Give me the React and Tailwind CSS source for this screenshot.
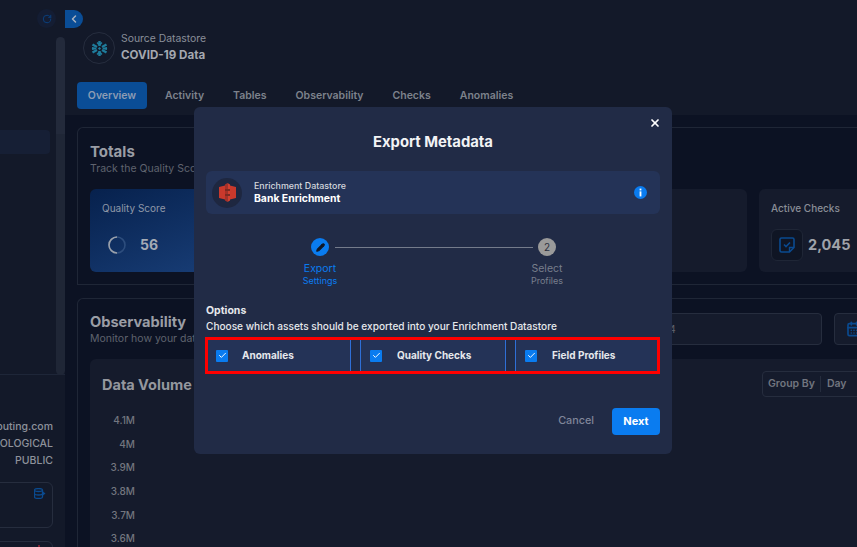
import React from 'react';
import { Check, ChevronLeft, Pencil, RotateCw, X, CalendarDays } from 'lucide-react';

const tabs = ['Activity', 'Tables', 'Observability', 'Checks', 'Anomalies'];
const axis = ['4.1M', '4M', '3.9M', '3.8M', '3.7M', '3.6M'];
const options = [
    { label: 'Anomalies', box: 'w-[143px] border-r', gap: 'pl-[8px]', text: 'ml-[14px]' },
    { label: 'Quality Checks', box: 'w-[146px] border-x', gap: 'pl-[9px]', text: 'ml-[15px]' },
    { label: 'Field Profiles', box: 'w-[142px] border-l', gap: 'pl-[9px]', text: 'ml-[15px]' },
];

const S3Logo = () => (
    <svg width="17" height="19" viewBox="0 0 17 19">
        <path d="M0 4 L6 2.5 V16.5 L0 15 Z" fill="#c9392c" />
        <path d="M17 4 L11 2.5 V16.5 L17 15 Z" fill="#c9392c" />
        <path d="M6 1.5 L8.5 0 V19 L6 17.5 Z" fill="#a82f26" />
        <path d="M11 1.5 L8.5 0 V19 L11 17.5 Z" fill="#d2402f" />
        <path d="M6 6 H11 V8 H6 Z M6 11 H11 V13 H6 Z" fill="#7d2a22" />
    </svg>
);

const SnowflakeLogo = () => (
    <svg width="17" height="17" viewBox="0 0 17 17" fill="none" stroke="#1f7c9c" strokeWidth="2.4">
        <path d="M8.5 1 V6 M8.5 11 V16" />
        <path d="M6.2 2.5 L8.5 5 L10.8 2.5 M6.2 14.5 L8.5 12 L10.8 14.5" strokeWidth="1.8" />
        <path d="M1.5 4.5 L6 7 M15.5 4.5 L11 7 M1.5 12.5 L6 10 M15.5 12.5 L11 10" />
        <path d="M1 7.8 L5.2 8.5 L1 9.2 M16 7.8 L11.8 8.5 L16 9.2" strokeWidth="1.6" />
        <rect x="7.4" y="7.4" width="2.2" height="2.2" transform="rotate(45 8.5 8.5)" fill="#1f7c9c" stroke="none" />
    </svg>
);

const InfoDot = () => (
    <svg width="13" height="13" viewBox="0 0 13 13">
        <circle cx="6.5" cy="6.5" r="6.5" fill="#0a7cf0" />
        <rect x="5.6" y="2.6" width="1.8" height="1.8" fill="#fff" />
        <rect x="5.6" y="5.4" width="1.8" height="5" fill="#fff" />
    </svg>
);

const NoteCheck = () => (
    <svg width="16" height="16" viewBox="0 0 16 16" fill="none" stroke="#0a4a8f">
        <path d="M10.5 15 H2.5 A1.5 1.5 0 0 1 1 13.5 V2.5 A1.5 1.5 0 0 1 2.5 1 H13.5 A1.5 1.5 0 0 1 15 2.5 V10.5 Z" strokeWidth="1.6" />
        <path d="M10.5 15 V10.5 H15" strokeWidth="1.4" />
        <path d="M5 7.5 L7 9.5 L11 5.5" strokeWidth="1.6" />
    </svg>
);

const DatabaseArrow = () => (
    <svg width="12" height="11" viewBox="0 0 12 11" fill="none" stroke="#0a4a8f" strokeWidth="1.3">
        <ellipse cx="4.5" cy="2" rx="4" ry="1.5" />
        <path d="M0.5 2 V9 C0.5 10 2.5 10.5 4.5 10.5 C6.5 10.5 8.5 10 8.5 9 V2 M0.5 5.5 C0.5 6.5 2.5 7 4.5 7 C6 7 7 6.8 8 6.3" />
        <path d="M9 3.5 L11.5 5.5 L9 7.5 Z" fill="#0a4a8f" stroke="none" />
    </svg>
);

const Sidebar = () => (
    <aside className="w-[65px] shrink-0 flex flex-col bg-[#131929] overflow-hidden">
        <div className="h-[375px] shrink-0 flex border-b border-[#1e2638]">
            <div className="w-[56px] shrink-0">
                <div className="flex justify-end pt-[9px]">
                    <div className="w-[19px] h-[19px] rounded-full bg-[#141d33] flex items-center justify-center">
                        <RotateCw size={10} strokeWidth={2.4} className="text-[#0a3f7c]" />
                    </div>
                </div>
                <div className="mt-[102px] h-[24px] w-[50px] rounded-r bg-[#161f35]" />
            </div>
            <div className="w-[9px] pt-[37px]">
                <div className="h-[97px] bg-[#232a3b] rounded-t-md" />
                <div className="h-[241px] bg-[#1f2636] rounded-b-md" />
            </div>
        </div>
        <div className="w-[53px] flex flex-col items-end pt-[43px] text-[10.5px] leading-[17px] font-medium text-[#8e929b] whitespace-nowrap">
            <span>Computing.com</span>
            <span>BIOLOGICAL</span>
            <span>PUBLIC</span>
            <div className="mt-[13px] w-[80px] h-[46px] shrink-0 rounded-md border border-[#262d3e] flex justify-end pt-[5px] pr-[6px]">
                <DatabaseArrow />
            </div>
            <div className="mt-[13px] w-[80px] h-[30px] shrink-0 rounded-md border border-[#262d3e] flex justify-end pr-[12px]">
                <div className="w-[2px] h-[3px] mt-[3px] bg-[#7a2233]" />
            </div>
        </div>
    </aside>
);

const Header = () => (
    <header className="h-[115px] shrink-0 bg-[#131929] flex flex-col">
        <div className="flex items-start">
            <div className="mt-[10px] w-[18px] h-[18px] rounded-r-full bg-[#0a4d96] flex items-center justify-center">
                <ChevronLeft size={12} strokeWidth={3} className="text-[#a9b1bf]" />
            </div>
            <div className="mt-[32px] flex items-center">
                <div className="w-[32px] h-[32px] rounded-full border border-[#262d3e] flex items-center justify-center">
                    <SnowflakeLogo />
                </div>
                <div className="ml-[6px]">
                    <div className="text-[10.4px] leading-[14px] text-[#8a8f99]">Source Datastore</div>
                    <div className="text-[11.6px] leading-[18px] font-bold text-[#a4a8b0]">COVID-19 Data</div>
                </div>
            </div>
        </div>
        <nav className="mt-[18px] ml-[12px] flex items-center text-[10.5px] font-semibold text-[#7d828c]">
            <span className="w-[70px] h-[27px] rounded bg-[#0a4d96] text-[#8c9cb4] flex items-center justify-center">Overview</span>
            <div className="ml-[18px] flex gap-[29px]">
                {tabs.map((t) => <span key={t}>{t}</span>)}
            </div>
        </nav>
    </header>
);

const Totals = () => (
    <section className="h-[158px] shrink-0 rounded-tl-md border border-r-0 border-[#1f2636] pl-[12px] pt-[15px]">
        <h2 className="text-[15px] leading-[18px] font-bold text-[#9a9da5]">Totals</h2>
        <p className="mt-px text-[10.5px] leading-[14px] text-[#5f636e] whitespace-nowrap">Track the Quality Score</p>
        <div className="mt-[13px] flex gap-[12px]">
            <div className="w-[657px] h-[83px] shrink-0 rounded-md flex">
                <div className="w-[200px] h-[83px] rounded-l-md bg-gradient-to-br from-[#07214d] to-[#1c4480] pl-[12px] pt-[12px]">
                    <div className="text-[10px] leading-[14px] text-[#8f98a8]">Quality Score</div>
                    <div className="mt-[20px] ml-[6px] flex items-center gap-[14px]">
                        <svg width="18" height="18" viewBox="0 0 18 18" fill="none">
                            <circle cx="9" cy="9" r="8" stroke="#2d4d7d" strokeWidth="1.6" />
                            <path d="M9 17 A8 8 0 1 1 9 1" stroke="#9aa0aa" strokeWidth="1.6" />
                        </svg>
                        <span className="text-[14px] leading-[20px] font-bold text-[#a5abb5]">56</span>
                    </div>
                </div>
                <div className="flex-1 h-[83px] rounded-r-md bg-[#151b2c]" />
            </div>
            <div className="w-[110px] h-[83px] shrink-0 rounded-md bg-[#151b2c] pl-[12px] pt-[12px]">
                <div className="text-[10px] leading-[14px] font-medium text-[#8a8e97]">Active Checks</div>
                <div className="mt-[14px] flex items-center gap-[5px]">
                    <div className="w-[32px] h-[32px] rounded-md bg-[#0f1524] border border-[#1f2636] flex items-center justify-center">
                        <NoteCheck />
                    </div>
                    <span className="text-[14.5px] font-bold text-[#a0a3aa]">2,045</span>
                </div>
            </div>
        </div>
    </section>
);

const Observability = () => (
    <section className="mt-[13px] flex-1 rounded-tl-md border border-r-0 border-[#1f2636] pl-[12px] pt-[14px]">
        <div className="flex h-[46px]">
            <div className="w-[560px] shrink-0">
                <h2 className="text-[14.6px] leading-[18px] font-bold text-[#9a9da5]">Observability</h2>
                <p className="mt-px text-[10.5px] leading-[14px] text-[#5f636e] whitespace-nowrap">Monitor how your data</p>
            </div>
            <div className="w-[172px] h-[32px] shrink-0 rounded bg-[#151b2c] border border-[#262d3e] flex items-center text-[10px] text-[#5f636e]">2024</div>
            <div className="ml-[12px] w-[40px] h-[32px] shrink-0 rounded bg-[#151b2c] border border-[#262d3e] pl-[11px] flex items-center">
                <CalendarDays size={16} strokeWidth={2.5} className="text-[#0a4a8f]" />
            </div>
        </div>
        <div className="bg-[#151b2c] rounded-tl-md h-[200px] pl-[12px] pt-[12px]">
            <div className="flex items-start">
                <h3 className="mt-[4px] w-[660px] shrink-0 text-[14.5px] leading-[20px] font-bold text-[#94979e]">Data Volume</h3>
                <div className="w-[120px] h-[26px] shrink-0 rounded border border-[#262d3e] flex items-center pl-[5px] text-[10.5px] font-semibold text-[#71757f]">
                    <span className="pr-[5px] border-r border-[#262d3e]">Group By</span>
                    <span className="pl-[6px]">Day</span>
                </div>
            </div>
            <div className="w-[33px] mt-[15px] flex flex-col items-end gap-[6.7px] text-[10px] leading-[17px] font-medium text-[#73767f]">
                {axis.map((a) => <span key={a}>{a}</span>)}
            </div>
        </div>
    </section>
);

const ExportModal = () => (
    <div className="absolute left-[194px] top-[107px] w-[478px] h-[347px] rounded-md bg-[#212b46] px-[12px] text-white">
        <button type="button" className="absolute right-[11px] top-[10px] text-white">
            <X size={12} strokeWidth={3.5} />
        </button>
        <h1 className="pt-[24px] text-center text-[14.8px] leading-[22px] font-bold text-[#f2f3f5]">Export Metadata</h1>
        <div className="mt-[18px] h-[43px] rounded-md bg-[#243357] flex items-center pl-[6px] pr-[13px]">
            <div className="w-[30px] h-[30px] rounded-full bg-[#1e2740] flex items-center justify-center">
                <S3Logo />
            </div>
            <div className="ml-[12px] flex-1">
                <div className="text-[8.9px] leading-[13px] font-medium text-[#d5d8de]">Enrichment Datastore</div>
                <div className="text-[10.4px] leading-[14px] font-bold text-white">Bank Enrichment</div>
            </div>
            <InfoDot />
        </div>
        <div className="mt-[24px] ml-[87px] flex items-start">
            <div className="w-[54px] flex flex-col items-center">
                <div className="w-[18px] h-[18px] rounded-full bg-[#0a7cf0] flex items-center justify-center">
                    <Pencil size={9} strokeWidth={3} fill="#111827" className="text-[#111827]" />
                </div>
                <div className="mt-[6px] text-[10.5px] leading-[13px] text-[#0a7cf0]">Export</div>
                <div className="text-[9px] leading-[12px] text-[#0a7cf0]">Settings</div>
            </div>
            <div className="mt-[9px] -mx-[12px] w-[198px] h-px bg-[#747b8b]" />
            <div className="ml-[-1px] w-[54px] flex flex-col items-center">
                <div className="w-[18px] h-[18px] rounded-full bg-[#9a9a9a] flex items-center justify-center text-[10px] text-[#2a2f3d]">2</div>
                <div className="mt-[6px] text-[10.5px] leading-[13px] text-[#787e8c]">Select</div>
                <div className="text-[9px] leading-[12px] text-[#787e8c]">Profiles</div>
            </div>
        </div>
        <div className="mt-[16px] text-[10.5px] leading-[15px] font-bold text-[#e6e8ec]">Options</div>
        <p className="text-[10.1px] leading-[16px] font-medium text-[#e6e8ec] whitespace-nowrap">Choose which assets should be exported into your Enrichment Datastore</p>
        <div className="-ml-px mt-[3px] w-[455px] h-[37px] border-[3px] border-[#ff0000] flex justify-between">
            {options.map((o) => (
                <label key={o.label} className={`${o.box} h-full bg-[#243357] border-[#2f6fd6] flex items-center ${o.gap}`}>
                    <span className="w-[12px] h-[12px] rounded-[1px] bg-[#0a7cf0] flex items-center justify-center">
                        <Check size={9} strokeWidth={2.5} className="text-white" />
                    </span>
                    <span className={`${o.text} text-[10px] font-bold text-[#e6e8ec]`}>{o.label}</span>
                </label>
            ))}
        </div>
        <div className="mt-[34px] flex justify-end items-center">
            <button type="button" className="text-[10.8px] font-medium text-[#80869a]">Cancel</button>
            <button type="button" className="ml-[18px] w-[48px] h-[27px] rounded-sm bg-[#0a7cf0] text-[11px] font-bold text-white">Next</button>
        </div>
    </div>
);

export default function App() {
    return (
        <div className="relative w-[857px] h-[547px] overflow-hidden flex bg-[#0c1223] font-['Inter',sans-serif]">
            <Sidebar />
            <main className="flex-1 min-w-0 flex flex-col">
                <Header />
                <div className="flex-1 pl-[12px] pt-[12px] flex flex-col overflow-hidden bg-[#0c1223]">
                    <Totals />
                    <Observability />
                </div>
            </main>
            <ExportModal />
        </div>
    );
}
